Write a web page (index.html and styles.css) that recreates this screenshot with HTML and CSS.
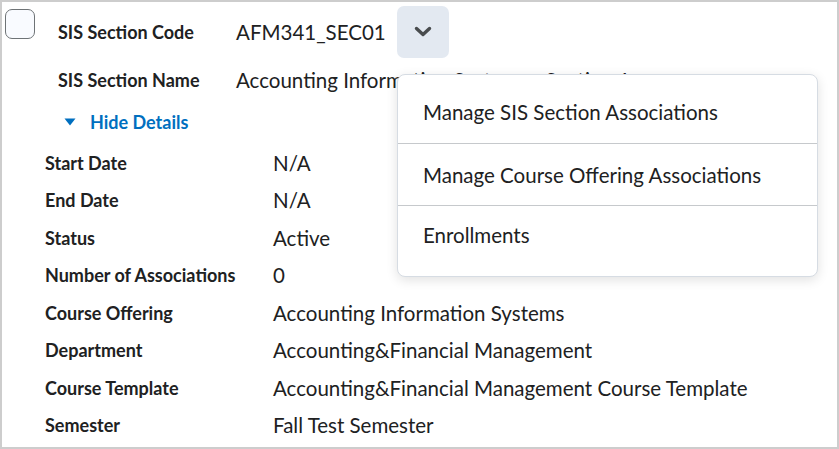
FILE: index.html
```html
<!DOCTYPE html>
<html lang="en">
<head>
  <meta charset="UTF-8" />
  <title>SIS Section</title>
  <link rel="stylesheet" href="styles.css">
</head>
<body>
  <div class="frame">
    <div class="head">
      <span class="checkbox"></span>
      <div class="summary">
        <div class="label row-code">SIS Section Code</div>
        <div class="value row-code">
          AFM341_SEC01
          <button class="menu-toggle" aria-label="Actions">
            <svg width="18" height="12" viewBox="0 0 18 12"><path d="M2.5 2.5 L9 8.5 L15.5 2.5" fill="none" stroke="#494c4e" stroke-width="3.4" stroke-linecap="round" stroke-linejoin="round"/></svg>
          </button>
        </div>
        <div class="label row-name">SIS Section Name</div>
        <div class="value row-name">Accounting Information Systems - Section 1</div>
      </div>
    </div>

    <div class="toggle">
      <svg width="12" height="8" viewBox="0 0 12 8"><path d="M0.5 0.5 H11.5 L6 7.5 Z" fill="#006fbf"/></svg>
      <span>Hide Details</span>
    </div>

    <div class="details">
      <div class="label">Start Date</div><div class="value">N/A</div>
      <div class="label">End Date</div><div class="value">N/A</div>
      <div class="label">Status</div><div class="value">Active</div>
      <div class="label">Number of Associations</div><div class="value">0</div>
      <div class="label">Course Offering</div><div class="value">Accounting Information Systems</div>
      <div class="label">Department</div><div class="value">Accounting&amp;Financial Management</div>
      <div class="label">Course Template</div><div class="value">Accounting&amp;Financial Management Course Template</div>
      <div class="label">Semester</div><div class="value">Fall Test Semester</div>
    </div>

    <ul class="menu">
      <li>Manage SIS Section Associations</li>
      <li>Manage Course Offering Associations</li>
      <li>Enrollments</li>
    </ul>
  </div>
</body>
</html>
```

FILE: styles.css
```css
:root {
  --text: #202122;
  --link: #006fbf;
  --frame: #cdcdcd;
  --divider: #c6c9cc;
}

body {
  margin: 0;
  font-family: Lato, "Open Sans", sans-serif;
  color: var(--text);
  background: #ffffff;
}

.frame {
  position: relative;
  box-sizing: border-box;
  width: 839px;
  height: 449px;
  border: 2px solid var(--frame);
  padding-top: 4px;
  overflow: hidden;
}

.head {
  display: flex;
  align-items: flex-start;
}

.checkbox {
  width: 30px;
  height: 30px;
  box-sizing: border-box;
  margin: 3px 0 0 3px;
  border: 1.5px solid #6e7376;
  border-radius: 7px;
  background: #f9fbff;
  flex-shrink: 0;
}

.summary {
  display: grid;
  grid-template-columns: 178px auto;
  margin-left: 23px;
}

.label {
  font-weight: 700;
  font-size: 18px;
}

.value {
  font-size: 20.5px;
  white-space: nowrap;
}

.summary .label,
.summary .value {
  display: flex;
  align-items: center;
}

.row-code {
  height: 52px;
}

.row-name {
  height: 44px;
}

.menu-toggle {
  width: 52px;
  height: 52px;
  margin-left: 11px;
  border: none;
  border-radius: 7px;
  background: #e3e9f1;
  display: flex;
  align-items: center;
  justify-content: center;
  padding: 0;
}

.toggle {
  display: flex;
  align-items: center;
  height: 40px;
  padding: 0 0 2px 62px;
  color: var(--link);
  font-weight: 700;
  font-size: 18px;
}

.toggle svg {
  margin-right: 14px;
}

.details {
  display: grid;
  grid-template-columns: 228px auto;
  grid-auto-rows: 37.5px;
  align-items: center;
  padding-left: 43px;
}

.menu {
  position: absolute;
  left: 395px;
  top: 72px;
  width: 421px;
  box-sizing: border-box;
  margin: 0;
  padding: 6px 0 9px;
  list-style: none;
  background: #ffffff;
  border: 1px solid #d6dce3;
  border-radius: 8px;
  box-shadow: 0 3px 12px rgba(0, 0, 0, 0.12);
}

.menu li {
  height: 62px;
  display: flex;
  align-items: center;
  padding-left: 25px;
  font-size: 20.5px;
  border-top: 1px solid var(--divider);
  box-sizing: border-box;
}

.menu li:first-child {
  border-top: none;
  height: 62px;
}

.menu li:last-child {
  padding-bottom: 3px;
}
```
